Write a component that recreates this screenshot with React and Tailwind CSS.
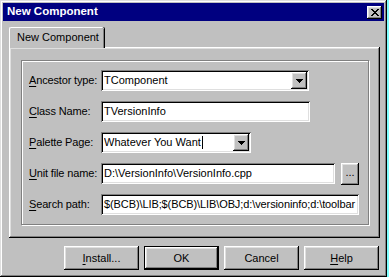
const raised = 'shadow-[inset_-1px_-1px_#000000,inset_1px_1px_#ffffff,inset_-2px_-2px_#808080,inset_2px_2px_#dfdfdf]'
const sunken = 'shadow-[inset_1px_1px_#808080,inset_-1px_-1px_#ffffff,inset_2px_2px_#000000,inset_-2px_-2px_#dfdfdf]'

function U({ children }) {
    return <span className="underline underline-offset-[2px] decoration-1">{children}</span>
}

function Arrow() {
    return (
        <svg width="7" height="4" viewBox="0 0 7 4" shapeRendering="crispEdges">
            <path d="M0 0h7v1h-1v1h-1v1h-1v1h-1v-1h-1v-1h-1v-1h-1z" fill="#000" />
        </svg>
    )
}

function Combo({ value, width, cursor }) {
    return (
        <div className={`flex items-center h-[21px] bg-white ${sunken} pl-[3px] pr-[2px]`} style={{ width }}>
            <span className="flex-1 flex items-center whitespace-nowrap overflow-hidden">
                {value}
                {cursor && <span className="inline-block w-[1px] h-[13px] bg-black ml-[1px]" />}
            </span>
            <div className={`w-[16px] h-[17px] flex items-center justify-center bg-[#c0c0c0] ${raised}`}>
                <Arrow />
            </div>
        </div>
    )
}

function Edit({ value, width, tight }) {
    return (
        <div className={`flex items-center h-[21px] bg-white ${sunken} pl-[3px] pr-[2px] whitespace-nowrap overflow-hidden ${tight ? 'tracking-[-0.1px]' : ''}`} style={{ width }}>
            {value}
        </div>
    )
}

function Row({ label, children }) {
    return (
        <div className="flex items-center h-[21px]">
            <div className="w-[72px] whitespace-nowrap tracking-[-0.15px]">{label}</div>
            {children}
        </div>
    )
}

function Button({ children, isDefault }) {
    if (isDefault) {
        return (
            <div className="w-[75px] h-[24px] border border-black">
                <div className={`w-full h-full flex items-center justify-center ${raised}`}>{children}</div>
            </div>
        )
    }
    return (
        <div className={`w-[75px] h-[24px] flex items-center justify-center ${raised}`}>{children}</div>
    )
}

export default function App() {
    return (
        <div className="flex w-[389px] h-[277px] bg-[#80ffff] text-[11px] text-black font-['Liberation_Sans',Arial,sans-serif]">
            <div className="w-[387px] h-[277px] bg-[#c0c0c0] p-[3px] flex flex-col shadow-[inset_-1px_-1px_#000000,inset_1px_1px_#dfdfdf,inset_-2px_-2px_#808080,inset_2px_2px_#ffffff]">
                {/* title bar */}
                <div className="h-[18px] bg-[#000080] flex items-center justify-between pl-[4px] pr-[2px]">
                    <span className="text-white font-bold text-[11.5px]">New Component</span>
                    <div className={`w-[15px] h-[13px] bg-[#c0c0c0] flex items-center justify-center ${raised}`}>
                        <svg width="8" height="7" viewBox="0 0 8 7" shapeRendering="crispEdges">
                            <path d="M0 0h2v1h1v1h2v-1h1v-1h2v1h-1v1h-1v1h-1v1h1v1h1v1h1v1h-2v-1h-1v-1h-2v1h-1v1h-2v-1h1v-1h1v-1h1v-1h-1v-1h-1v-1h-1z" fill="#000" />
                        </svg>
                    </div>
                </div>

                {/* tabs */}
                <div className="pl-[6px] pt-[6px]">
                    <div className="relative z-10 -mb-[1px] w-[95px] h-[21px] bg-[#c0c0c0] border-l border-t border-white rounded-tl-[2px] rounded-tr-[2px] shadow-[inset_-1px_0_#808080,1px_0_#000000] flex items-center pl-[7px] pb-[1px]">
                        New Component
                    </div>
                    <div className={`w-[371px] h-[191px] pl-[12px] pt-[13px] ${raised}`}>
                        <div className="w-[348px] h-[165px] border border-[#808080] shadow-[inset_1px_1px_#ffffff,1px_1px_#ffffff] pl-[7px] pt-[9px] flex flex-col gap-[10px]">
                            <Row label={<><U>A</U>ncestor type:</>}>
                                <Combo value="TComponent" width={208} />
                            </Row>
                            <Row label={<><U>C</U>lass Name:</>}>
                                <Edit value="TVersionInfo" width={209} />
                            </Row>
                            <Row label={<><U>P</U>alette Page:</>}>
                                <Combo value="Whatever You Want" width={150} cursor />
                            </Row>
                            <Row label={<><U>U</U>nit file name:</>}>
                                <Edit value="D:\VersionInfo\VersionInfo.cpp" width={234} />
                                <div className={`ml-[6px] w-[18px] h-[22px] flex items-center justify-center pb-[3px] ${raised}`}>...</div>
                            </Row>
                            <Row label={<><U>S</U>earch path:</>}>
                                <Edit value="$(BCB)\LIB;$(BCB)\LIB\OBJ;d:\versioninfo;d:\toolbar" width={258} tight />
                            </Row>
                        </div>
                    </div>
                </div>

                {/* buttons */}
                <div className="flex gap-[5px] pl-[61px] pt-[8px]">
                    <Button><U>I</U>nstall...</Button>
                    <Button isDefault>OK</Button>
                    <Button>Cancel</Button>
                    <Button><U>H</U>elp</Button>
                </div>
            </div>
        </div>
    )
}
